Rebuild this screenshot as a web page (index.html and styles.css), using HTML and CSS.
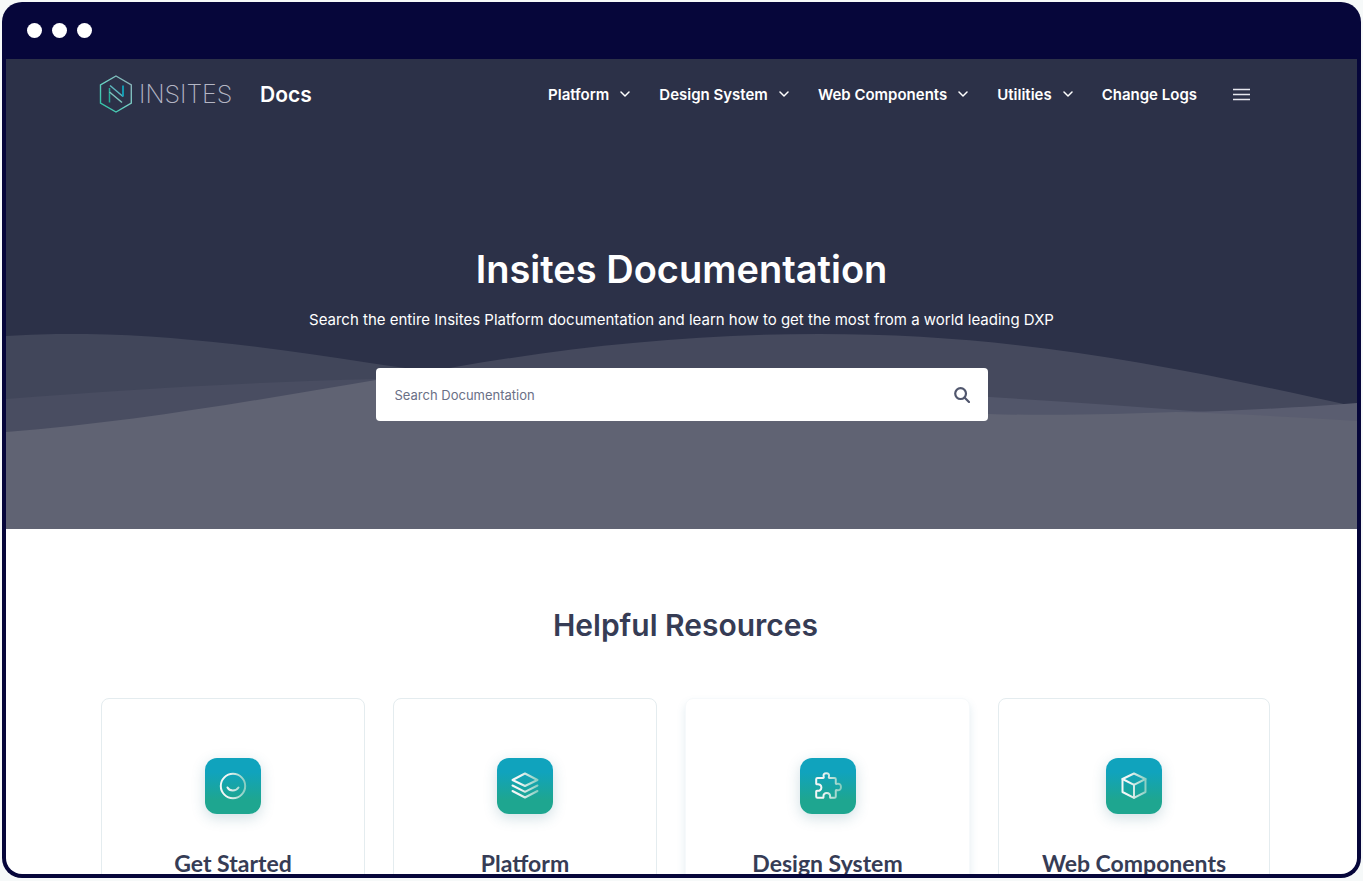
FILE: index.html
```html
<!DOCTYPE html>
<html lang="en">
<head>
    <meta charset="UTF-8">
    <meta name="viewport" content="width=device-width, initial-scale=1.0">
    <title>Insites Documentation</title>
    <link rel="stylesheet" href="styles.css">
</head>
<body>
    <div class="browser">
        <div class="browser-bar">
            <span class="dot"></span>
            <span class="dot"></span>
            <span class="dot"></span>
        </div>

        <div class="page">
            <div class="hero">
                <svg class="waves" viewBox="0 0 1351 195" preserveAspectRatio="none" aria-hidden="true">
                    <path fill="#41465a" d="M0 2C120 -6 240 10 364 29C400 34 440 40 500 50V110H0Z"/>
                    <path fill="#494d61" d="M0 65C130 55 250 48 370 45V110H0Z"/>
                    <path fill="#45495d" d="M380 48C410 40 430 36 449 33C570 12 690 0 813 0C1000 0 1150 28 1351 73V195H380Z"/>
                    <path fill="#52566a" d="M900 58C1000 64 1100 70 1200 78L1351 88V195H900Z"/>
                    <path fill="#5a5d70" d="M1160 79C1230 77 1300 73 1351 69V195H1160Z"/>
                    <path fill="#606373" d="M0 98C130 88 250 66 370 46C560 30 760 60 982 80C1050 82 1110 80 1170 78C1240 80 1300 84 1351 87V195H0Z"/>
                </svg>

                <header class="header">
                    <a class="logo" href="#">
                        <svg class="logo-mark" viewBox="0 0 34 38" fill="none" aria-hidden="true">
                            <defs>
                                <linearGradient id="hex" x1="0" y1="1" x2="1" y2="0">
                                    <stop offset="0" stop-color="#20c0a0"/>
                                    <stop offset=".5" stop-color="#6fd0c4"/>
                                    <stop offset="1" stop-color="#8fa9b4"/>
                                </linearGradient>
                            </defs>
                            <path stroke="url(#hex)" stroke-width="1.4" d="M17 1L32.300 10V28L17 37L1.500 28V10Z"/>
                            <path stroke="#25ab98" stroke-width="1.500" d="M10.500 27.500V13"/>
                            <path stroke="#7cc4bd" stroke-width="1.500" d="M10.500 17L23 27.500"/>
                            <path stroke="#5fb9c0" stroke-width="1.500" d="M11 10.500L24 21.500"/>
                            <path stroke="#12a4bd" stroke-width="1.800" d="M24 10.500V21.500"/>
                        </svg>
                        <span class="logo-name">INSITES</span>
                        <span class="logo-docs">Docs</span>
                    </a>
                    <nav class="nav">
                        <button class="nav-item" type="button">Platform
                            <svg class="chevron" viewBox="0 0 10 6"><path d="M1 1L5 5L9 1"/></svg>
                        </button>
                        <button class="nav-item" type="button">Design System
                            <svg class="chevron" viewBox="0 0 10 6"><path d="M1 1L5 5L9 1"/></svg>
                        </button>
                        <button class="nav-item" type="button">Web Components
                            <svg class="chevron" viewBox="0 0 10 6"><path d="M1 1L5 5L9 1"/></svg>
                        </button>
                        <button class="nav-item" type="button">Utilities
                            <svg class="chevron" viewBox="0 0 10 6"><path d="M1 1L5 5L9 1"/></svg>
                        </button>
                        <a class="nav-item" href="#">Change Logs</a>
                        <button class="menu" type="button" aria-label="Menu">
                            <svg viewBox="0 0 17 13"><path d="M0 1.500H17M0 6.500H17M0 11.500H17"/></svg>
                        </button>
                    </nav>
                </header>

                <div class="intro">
                    <h1>Insites Documentation</h1>
                    <p>Search the entire Insites Platform documentation and learn how to get the most from a world leading DXP</p>
                    <form class="search">
                        <input type="text" placeholder="Search Documentation" aria-label="Search Documentation">
                        <button type="submit" aria-label="Search">
                            <svg viewBox="0 0 16 16"><circle cx="6.600" cy="6.600" r="5.400"/><path d="M10.500 10.500L15 15"/></svg>
                        </button>
                    </form>
                </div>
            </div>

            <main class="resources">
                <h2>Helpful Resources</h2>
                <div class="cards">
                    <a class="card" href="#">
                        <span class="card-icon">
                            <svg viewBox="0 0 28 28">
                                <defs>
                                    <linearGradient id="fade" gradientUnits="userSpaceOnUse" x1="0" y1="0" x2="28" y2="0">
                                        <stop offset=".3" stop-color="#f4f6f6"/>
                                        <stop offset="1" stop-color="#7fcabd"/>
                                    </linearGradient>
                                </defs>
                                <circle cx="14" cy="14" r="12.200"/>
                                <path d="M8.500 15.500C10.500 19.500 17 19.500 19.500 15.500"/>
                            </svg>
                        </span>
                        <h3>Get Started</h3>
                    </a>
                    <a class="card" href="#">
                        <span class="card-icon">
                            <svg viewBox="0 0 28 28">
                                <path d="M14 1.500L26.500 8L14 14L1.500 8Z"/>
                                <path d="M1.500 13.500L14 19.800L26.500 13.500"/>
                                <path d="M1.500 19L14 25.500L26.500 19"/>
                            </svg>
                        </span>
                        <h3>Platform</h3>
                    </a>
                    <a class="card card-active" href="#">
                        <span class="card-icon">
                            <svg viewBox="0 0 28 28">
                                <path d="M3.500 6H9C9.800 6 9.900 5.400 9.700 4.700C9 2.500 10.200 1.300 12.300 1.300S15.600 2.500 14.900 4.700C14.700 5.400 14.800 6 15.600 6H20.500Q21.800 6 21.800 7.300V11.200C21.800 12 22.300 12.100 23 11.900C25.300 11.300 27 12.500 27 15S25.300 18.700 23 18.100C22.300 17.900 21.800 18 21.800 18.800V24.500Q21.800 25.800 20.500 25.800H16.800C16.200 25.800 16 25.300 16.100 24.600C16.400 22.300 15 21 12.800 21S9.200 22.300 9.500 24.600C9.600 25.300 9.400 25.800 8.800 25.800H3.500Q2.200 25.800 2.200 24.500V19.500C2.200 18.800 2.700 18.700 3.400 18.800C5.500 19.100 7.400 17.800 7.400 15.500S5.500 12 3.400 12.300C2.700 12.400 2.200 12.200 2.200 11.500V7.300Q2.200 6 3.500 6Z"/>
                            </svg>
                        </span>
                        <h3>Design System</h3>
                    </a>
                    <a class="card" href="#">
                        <span class="card-icon">
                            <svg viewBox="0 0 28 28">
                                <path d="M14 1.500L25.500 7V20L14 25.800L2.500 20V7Z"/>
                                <path d="M2.500 7L14 12.800L25.500 7M14 12.800V25.800"/>
                            </svg>
                        </span>
                        <h3>Web Components</h3>
                    </a>
                </div>
            </main>
        </div>
    </div>
</body>
</html>
```
FILE: styles.css
```css
* {
    box-sizing: border-box;
}

body {
    margin: 0;
    padding: 2px 2px 3px;
    height: 100vh;
    background-color: #f6f9f9;
    font-family: Inter, sans-serif;
    color: #363c55;
    overflow: hidden;
}

button {
    padding: 0;
    border: none;
    background: none;
    font-family: inherit;
    cursor: pointer;
}

a {
    color: inherit;
    text-decoration: none;
}

/* Browser frame */
.browser {
    display: flex;
    flex-direction: column;
    height: 100%;
    padding: 0 4px 4px;
    background-color: #06063a;
    border-radius: 20px;
}

.browser-bar {
    display: flex;
    flex: none;
    align-items: center;
    gap: 10px;
    height: 57px;
    padding: 0 21px;
}

.dot {
    width: 15px;
    height: 15px;
    border-radius: 50%;
    background-color: #fff;
}

.page {
    flex: 1;
    min-height: 0;
    overflow: hidden;
    background-color: #fff;
    border-radius: 0 0 16px 16px;
}

/* Hero */
.hero {
    position: relative;
    height: 470px;
    background-color: #2c3148;
    color: #fff;
}

.waves {
    position: absolute;
    left: 0;
    bottom: 0;
    width: 100%;
    height: 195px;
}

.header {
    position: relative;
    display: flex;
    align-items: center;
    justify-content: space-between;
    height: 70px;
    padding: 0 107px 0 93px;
}

.logo {
    display: flex;
    align-items: center;
}

.logo-mark {
    width: 34px;
    height: 38px;
    margin-right: 6px;
}

.logo-name {
    width: 121px;
    font-size: 25px;
    font-weight: 200;
    line-height: 30px;
    color: #b4b6c4;
}

.logo-docs {
    font-size: 21px;
    font-weight: 600;
}

.nav {
    display: flex;
    align-items: center;
    gap: 29px;
}

.nav-item {
    display: flex;
    align-items: center;
    gap: 11px;
    font-size: 15px;
    font-weight: 600;
    color: #fff;
    white-space: nowrap;
}

.chevron {
    width: 10px;
    height: 6px;
    fill: none;
    stroke: #fff;
    stroke-width: 1.5;
    stroke-linecap: round;
    stroke-linejoin: round;
}

.menu {
    display: flex;
    margin-left: 7px;
}

.menu svg {
    width: 17px;
    height: 13px;
    stroke: #e6e7ee;
    stroke-width: 1.4;
}

.intro {
    position: relative;
    display: flex;
    flex-direction: column;
    align-items: center;
    padding-top: 116px;
    text-align: center;
}

h1 {
    margin: 0;
    font-size: 38px;
    font-weight: 600;
    line-height: 48px;
}

.intro p {
    margin: 15px 0 37px;
    font-size: 15px;
    line-height: 23px;
}

.search {
    display: flex;
    width: 612px;
    max-width: 100%;
    height: 53px;
    padding: 0 18px 0 19px;
    background-color: #fff;
    border-radius: 4px;
}

.search input {
    flex: 1;
    padding: 0;
    border: none;
    outline: none;
    font-family: inherit;
    font-size: 13px;
    color: #363c55;
}

.search input::placeholder {
    color: #6a7086;
    opacity: 1;
}

.search button {
    display: flex;
    align-items: center;
}

.search svg {
    width: 16px;
    height: 16px;
    fill: none;
    stroke: #50566d;
    stroke-width: 2.2;
    stroke-linecap: round;
}

/* Helpful resources */
.resources {
    padding: 76px 87px 0 95px;
}

h2 {
    margin: 0 0 53px;
    font-size: 30px;
    font-weight: 600;
    line-height: 40px;
    text-align: center;
}

.cards {
    display: grid;
    grid-template-columns: 264fr 264fr 285fr 272fr;
    gap: 28px;
}

.card {
    display: flex;
    flex-direction: column;
    align-items: center;
    height: 300px;
    padding-top: 59px;
    border: 1px solid #e4ecef;
    border-radius: 8px;
}

.card-active {
    border-color: #f6f9fb;
    box-shadow: 0 5px 8px rgba(60, 130, 160, 0.15);
}

.card-icon {
    display: flex;
    align-items: center;
    justify-content: center;
    width: 56px;
    height: 56px;
    border-radius: 12px;
    background: linear-gradient(#10a3bd 25%, #1ea690 75%);
    box-shadow: 0 4px 14px rgba(40, 110, 130, 0.22);
}

.card-icon svg {
    width: 28px;
    height: 28px;
    fill: none;
    stroke: url(#fade);
    stroke-width: 2;
    stroke-linejoin: round;
    stroke-linecap: round;
}

h3 {
    margin: 34px 0 0;
    font-family: Lato, sans-serif;
    font-size: 23px;
    font-weight: 700;
    line-height: 30px;
}

@media screen and (max-width: 1100px) {
    .header,
    .resources {
        padding-left: 24px;
        padding-right: 24px;
    }

    .nav-item {
        display: none;
    }

    .cards {
        grid-template-columns: 1fr 1fr;
    }
}
```
